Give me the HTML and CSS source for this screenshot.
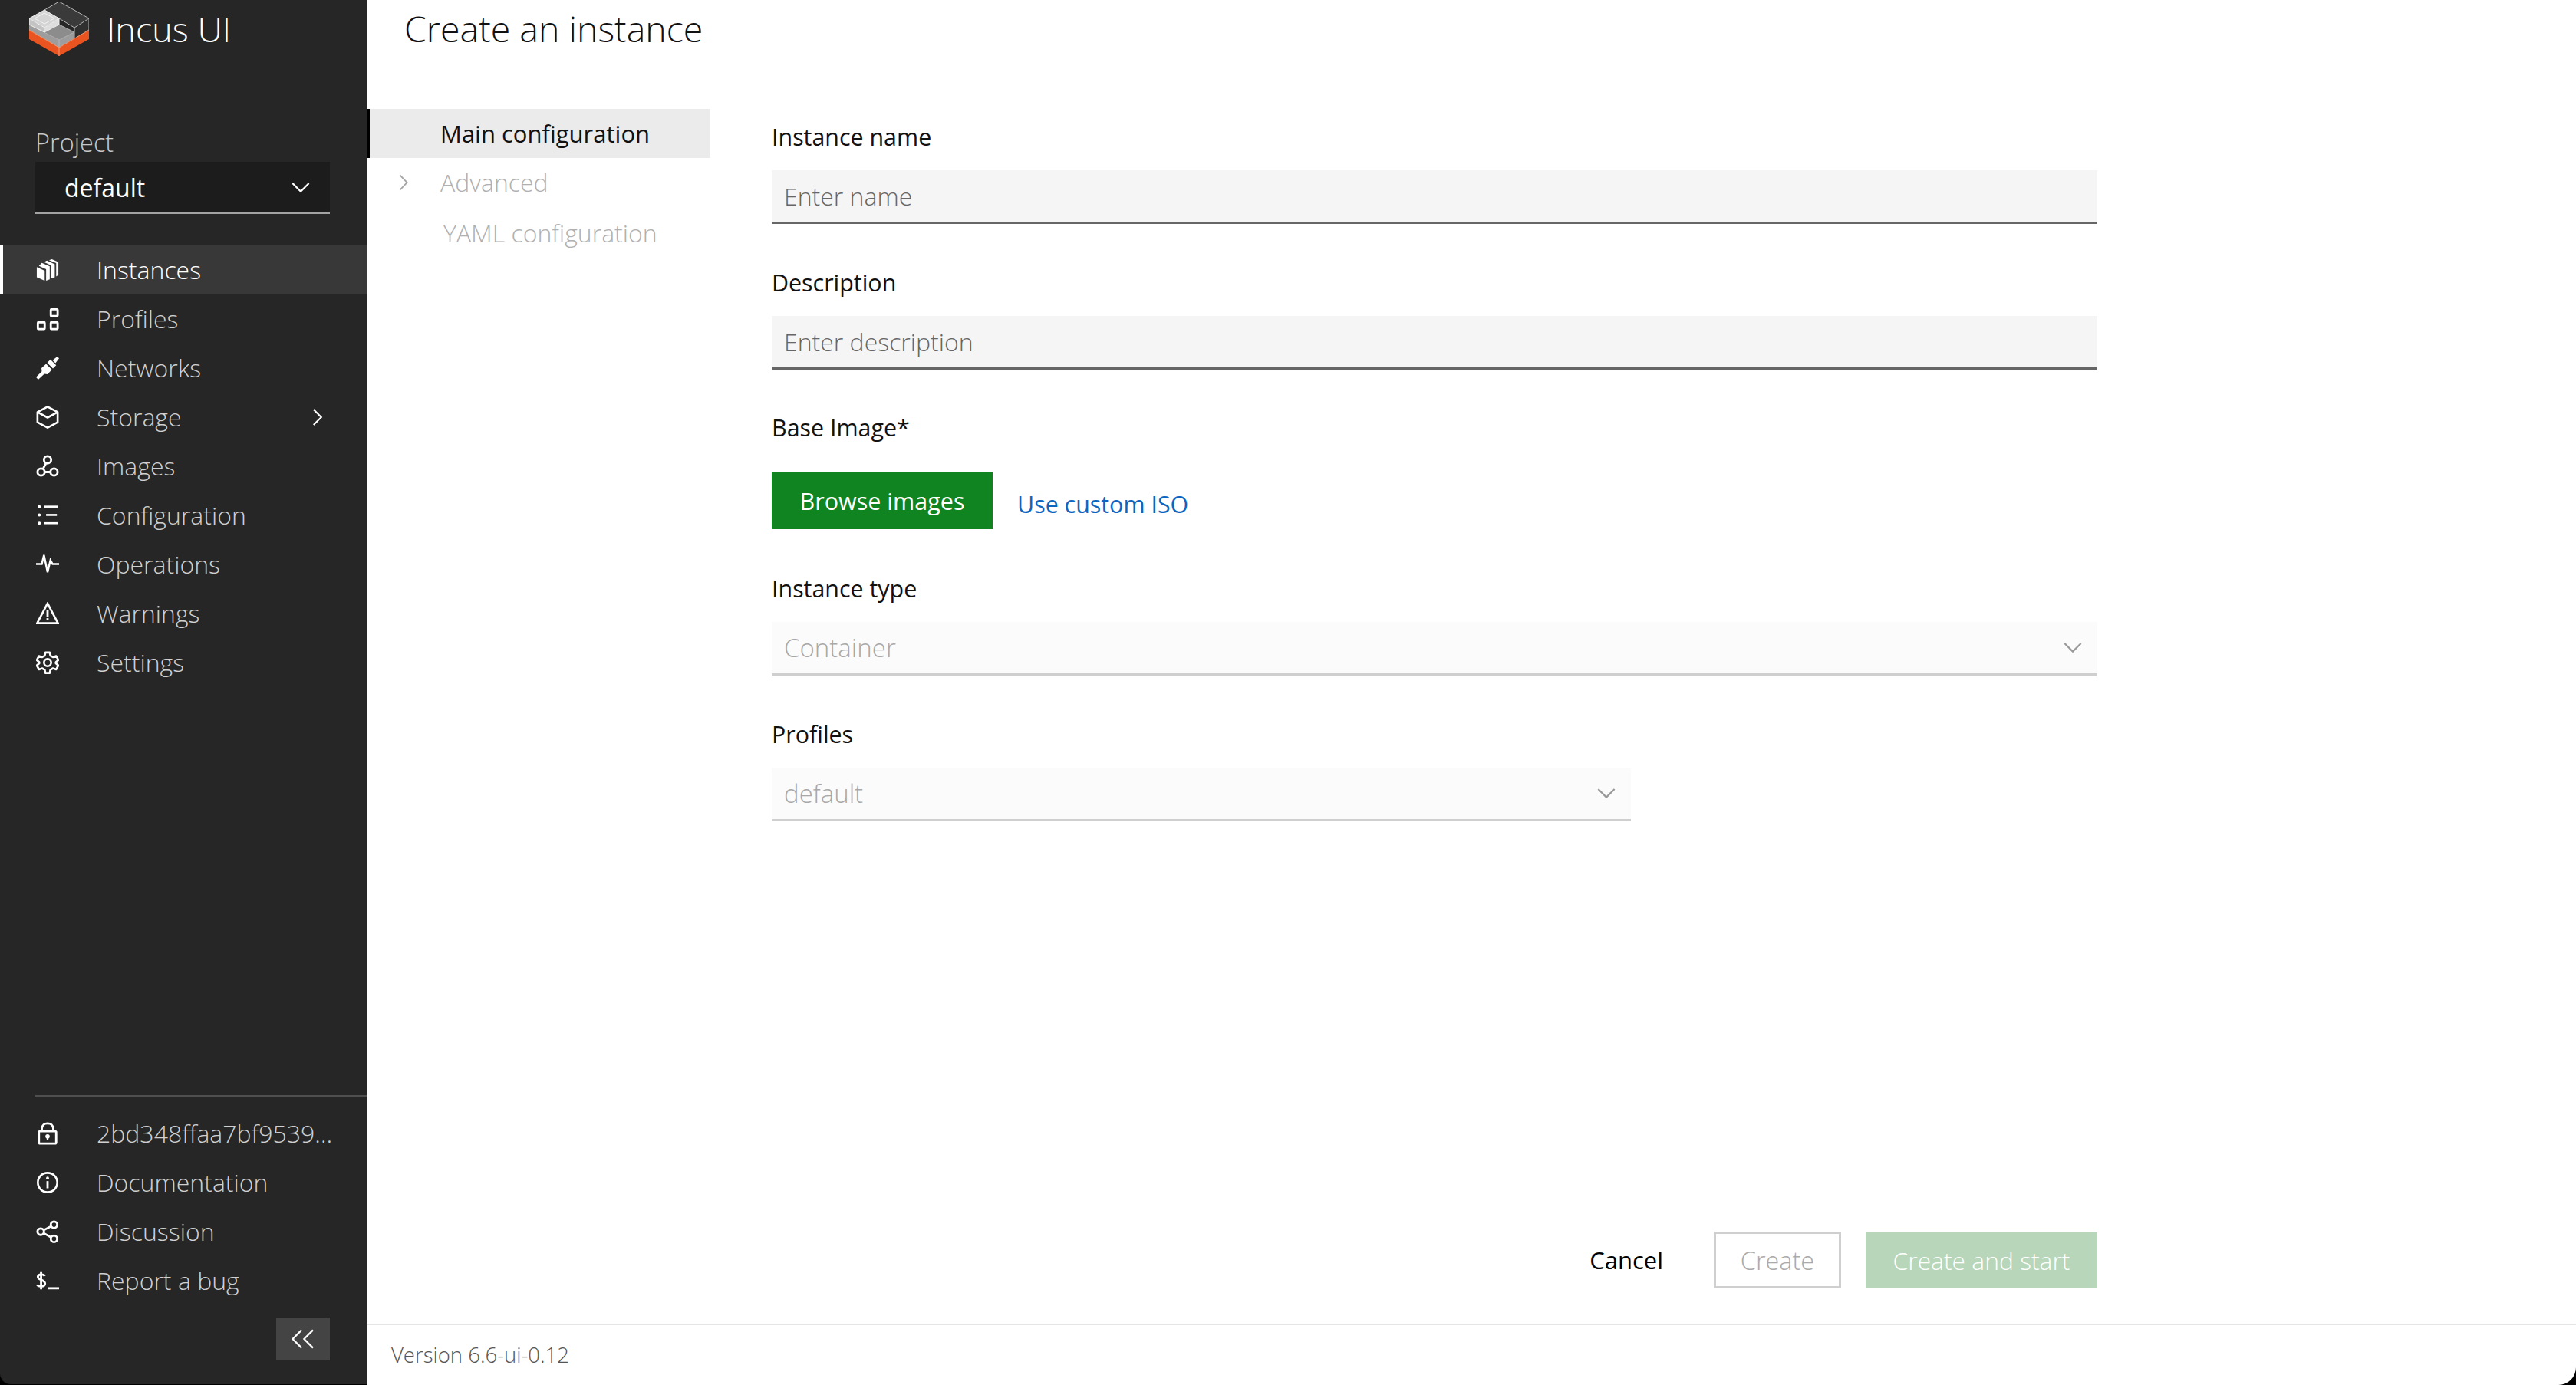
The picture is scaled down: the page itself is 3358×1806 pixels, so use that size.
FILE: index.html
```html
<!DOCTYPE html>
<html lang="en">
<head>
<meta charset="utf-8">
<title>Incus UI</title>
<link rel="stylesheet" href="styles.css">
</head>
<body>
<div class="app">
  <aside class="sidebar">
    <div class="brand">
      <svg class="logo" viewBox="38 2 78 72" width="78" height="72">
        <path d="M38 39 77 62 116 39V51L77 73 38 51Z" fill="#e95420"/>
        <path d="M38 32 77 52 97 42V50L77 62 38 39Z" fill="#9d9d9d"/>
        <path d="M58 42 77 32 97 42 77 52Z" fill="#8c8c8c"/>
        <path d="M58 13 77 2 116 24 97 36 77 24Z" fill="#3a3a3a"/>
        <path d="M97 36 116 24V39L97 50Z" fill="#303030"/>
        <path d="M38 24 58 13 77 24 58 36Z" fill="#d4d4d4"/>
        <path d="M38 24 58 36V42L38 32Z" fill="#c4c4c4"/>
        <path d="M58 36 77 24V32L58 42Z" fill="#dedede"/>
        <path d="M58 13 77 2 116 24V39M77 24 97 36 116 24M97 36V50M38 32 77 52 97 42 77 32M77 52V62M58 42 58 36" fill="none" stroke="#b5b5b5" stroke-width="1"/>
        <path d="M38 24 58 13 77 24 58 36ZM38 24V32L58 42 77 32V24M58 36V42M45 24 58 17 71 24 58 31Z" fill="none" stroke="#f2f2f2" stroke-width="1"/>
        <path d="M38 39 77 62 116 39M77 62V73" fill="none" stroke="#f49a73" stroke-width="1"/>
      </svg>
      <span class="brand-name">Incus UI</span>
    </div>
    <div class="project">
      <div class="project-label">Project</div>
      <div class="project-select">
        <span>default</span>
        <svg class="chev-down-w" viewBox="0 0 26 16" width="24" height="15"><path d="M1.500 2 13 13.500 24.500 2" fill="none" stroke="#fff" stroke-width="2.400"/></svg>
      </div>
    </div>
    <nav class="nav">
      <a class="nav-item active">
        <svg class="nav-icon" viewBox="0 0 32 32"><path d="M1 12 12 17V31L1 26Z" fill="#fff"/><path d="M8 6 19 11V29L14 31V15L4 10.500ZM15 3 26 8V26L21 28V9.500L11 5ZM22 1 31 5V23L28 25V6.500L18 2.500Z" fill="#fff"/></svg>
        <span>Instances</span>
      </a>
      <a class="nav-item">
        <svg class="nav-icon" viewBox="0 0 32 32"><g fill="none" stroke="#fff" stroke-width="3"><rect x="20.500" y="2.500" width="9.500" height="9.500" rx="1"/><rect x="2.500" y="20.500" width="9.500" height="9.500" rx="1"/><rect x="20.500" y="20.500" width="9.500" height="9.500" rx="1"/></g></svg>
        <span>Profiles</span>
      </a>
      <a class="nav-item">
        <svg class="nav-icon" viewBox="0 0 32 32"><path d="M0 28.500 8 20.500 7.500 16 14 10 22 18 16 24.500 11.500 24 3 32ZM15.500 8.500 20 4 28 12 23.500 16.500ZM23 5 29.500 0 32 2.500 27 9Z" fill="#fff"/></svg>
        <span>Networks</span>
      </a>
      <a class="nav-item has-more">
        <svg class="nav-icon" viewBox="0 0 32 32"><path d="M16 1.500 30 9V23L16 30.500 2 23V9ZM2 9 16 16.500 30 9" fill="none" stroke="#fff" stroke-width="2.800" stroke-linejoin="round"/></svg>
        <span>Storage</span>
        <svg class="chev-right" viewBox="0 0 16 26" width="14" height="24"><path d="M2 1.500 13.500 13 2 24.500" fill="none" stroke="#fff" stroke-width="2.400"/></svg>
      </a>
      <a class="nav-item">
        <svg class="nav-icon" viewBox="0 0 32 32"><g fill="none" stroke="#fff" stroke-width="3"><circle cx="16" cy="7" r="5"/><circle cx="7" cy="24" r="5"/><circle cx="25" cy="24" r="5"/><path d="M12 24H20M14 11.500 10 19"/></g></svg>
        <span>Images</span>
      </a>
      <a class="nav-item">
        <svg class="nav-icon" viewBox="0 0 32 32"><g fill="#fff"><circle cx="4.500" cy="4" r="2.200"/><circle cx="4.500" cy="15.500" r="2.200"/><circle cx="4.500" cy="27" r="2.200"/><rect x="11" y="2.500" width="19" height="2.800"/><rect x="14" y="14" width="15" height="2.800"/><rect x="11" y="25.500" width="19" height="2.800"/></g></svg>
        <span>Configuration</span>
      </a>
      <a class="nav-item">
        <svg class="nav-icon" viewBox="0 0 32 32"><path d="M0 15.500H8L11 3 16 27 20 10 23 15.500H32" fill="none" stroke="#fff" stroke-width="2.600"/></svg>
        <span>Operations</span>
      </a>
      <a class="nav-item">
        <svg class="nav-icon" viewBox="0 0 32 32"><path d="M16 2 30.500 29.500H1.500Z" fill="none" stroke="#fff" stroke-width="2.800"/><rect x="14.500" y="11.500" width="3" height="9" fill="#fff"/><rect x="14.500" y="22.500" width="3" height="3" fill="#fff"/></svg>
        <span>Warnings</span>
      </a>
      <a class="nav-item">
        <svg class="nav-icon" viewBox="0 0 32 32"><g fill="none" stroke="#fff" stroke-width="2.800" stroke-linejoin="round"><path d="M13 2H19L20 6.500 23.500 8.500 28 7 31 12.500 27.500 15.500V17L31 20 28 25.500 23.500 24 20 26 19 30.500H13L12 26 8.500 24 4 25.500 1 20 4.500 17V15.500L1 12.500 4 7 8.500 8.500 12 6.500Z"/><circle cx="16" cy="16" r="5"/></g></svg>
        <span>Settings</span>
      </a>
    </nav>
    <div class="side-bottom">
      <a class="nav-item">
        <svg class="nav-icon" viewBox="0 0 32 32"><path d="M8 13V9.500C8 -.5 24 -.5 24 9.500V13" fill="none" stroke="#fff" stroke-width="3"/><rect x="4" y="13" width="24" height="17" rx="1.500" fill="none" stroke="#fff" stroke-width="3"/><circle cx="16" cy="20" r="3" fill="#fff"/><rect x="14.800" y="20" width="2.400" height="5.500" fill="#fff"/></svg>
        <span class="truncate">2bd348ffaa7bf9539…</span>
      </a>
      <a class="nav-item">
        <svg class="nav-icon" viewBox="0 0 32 32"><circle cx="16" cy="16" r="13.500" fill="none" stroke="#fff" stroke-width="2.800"/><circle cx="16" cy="9.800" r="2" fill="#fff"/><rect x="14.500" y="14" width="3" height="10" fill="#fff"/></svg>
        <span>Documentation</span>
      </a>
      <a class="nav-item">
        <svg class="nav-icon" viewBox="0 0 32 32"><g fill="none" stroke="#fff" stroke-width="3"><circle cx="25" cy="6.500" r="4.500"/><circle cx="25" cy="26" r="4.500"/><circle cx="6.500" cy="16" r="4.500"/><path d="M10.500 14 21 8.500M10.500 18 21 24"/></g></svg>
        <span>Discussion</span>
      </a>
      <a class="nav-item">
        <svg class="nav-icon" viewBox="0 0 32 32"><path d="M12 9.500C11 7 3 6 2.500 10.500 2 15.500 12.500 14 12.500 20 12 25 3 24.500 1.500 21.500M7 3V28" fill="none" stroke="#fff" stroke-width="3"/><rect x="17" y="25" width="15" height="3" fill="#fff"/></svg>
        <span>Report a bug</span>
      </a>
      <div class="collapse-row">
        <button class="collapse-btn"><svg viewBox="0 0 34 28" width="32" height="26"><path d="M15 1.500 2.500 14 15 26.500M31 1.500 18.500 14 31 26.500" fill="none" stroke="#fff" stroke-width="2.400"/></svg></button>
      </div>
    </div>
  </aside>
  <main class="main">
    <div class="content">
      <h1 class="page-title">Create an instance</h1>
      <div class="columns">
        <nav class="form-nav">
          <a class="form-nav-item selected">Main configuration</a>
          <a class="form-nav-item muted advanced"><svg class="chev-side" viewBox="0 0 14 26" width="14" height="22"><path d="M1.500 1.500 12.500 13 1.500 24.500" fill="none" stroke="#a6a6a6" stroke-width="2.200"/></svg>Advanced</a>
          <a class="form-nav-item muted yaml">YAML configuration</a>
        </nav>
        <form class="form">
          <div class="field">
            <label class="label">Instance name</label>
            <div class="input">Enter name</div>
          </div>
          <div class="field">
            <label class="label">Description</label>
            <div class="input">Enter description</div>
          </div>
          <div class="field base">
            <label class="label">Base Image*</label>
            <div class="base-row">
              <button type="button" class="btn-browse">Browse images</button>
              <a class="link">Use custom ISO</a>
            </div>
          </div>
          <div class="field">
            <label class="label">Instance type</label>
            <div class="input disabled"><span>Container</span><svg viewBox="0 0 26 16" width="24" height="15"><path d="M1.500 2 13 13.500 24.500 2" fill="none" stroke="#999" stroke-width="2.400"/></svg></div>
          </div>
          <div class="field short">
            <label class="label">Profiles</label>
            <div class="input disabled"><span>default</span><svg viewBox="0 0 26 16" width="24" height="15"><path d="M1.500 2 13 13.500 24.500 2" fill="none" stroke="#999" stroke-width="2.400"/></svg></div>
          </div>
        </form>
      </div>
      <div class="actions">
        <a class="cancel">Cancel</a>
        <button class="btn-create">Create</button>
        <button class="btn-start">Create and start</button>
      </div>
    </div>
    <footer class="footer">Version 6.6-ui-0.12</footer>
  </main>
</div>
</body>
</html>
```
FILE: styles.css
```css
* { box-sizing: border-box; }
html, body { margin: 0; height: 100%; background: #000; }
body { font-family: "Open Sans", "Noto Sans", sans-serif; font-weight: 300; font-size: 32px; overflow: hidden; }
.app { display: flex; width: 3358px; height: 1806px; background: #000; }
.sidebar { width: 478px; height: 1805px; background: #262626; color: #d0d0d0; display: flex; flex-direction: column; border-bottom-left-radius: 14px; }
.brand { height: 76px; padding: 2px 0 0 38px; display: flex; align-items: flex-start; gap: 23px; }
.logo { display: block; }
.brand-name { font-size: 45px; color: #fff; line-height: 76px; margin-top: -2px; }
.project { padding: 87px 48px 0 46px; height: 244px; }
.project-label { height: 48px; line-height: 46px; color: #c8c8c8; font-size: 32.500px; }
.project-select { height: 68px; background: #1c1c1c; border-bottom: 2px solid #a3a3a3; padding: 0 26px 0 38px; display: flex; align-items: center; justify-content: space-between; color: #fff; font-weight: 400; font-size: 32px; }
.nav { display: flex; flex-direction: column; }
.nav-item { height: 64px; padding-left: 47px; display: flex; align-items: center; gap: 49px; position: relative; font-size: 32px; }
.nav-item span { margin-bottom: 2px; }
.nav-item.active { background: #383838; border-left: 4px solid #fff; padding-left: 43px; color: #fff; }
.nav-icon { width: 30px; height: 30px; flex: none; }
.chev-right { position: absolute; right: 57px; top: 20px; }
.side-bottom { margin-top: auto; margin-left: 46px; border-top: 2px solid #4f4f4f; padding-top: 16px; }
.side-bottom .nav-item { padding-left: 1px; }
.truncate { white-space: nowrap; }
.collapse-row { display: flex; justify-content: flex-end; padding: 16px 48px 31px 0; }
.collapse-btn { width: 70px; height: 56px; background: #444; border: 0; padding: 0; display: flex; align-items: center; justify-content: center; }
.main { width: 2880px; height: 1806px; background: #fff; display: flex; flex-direction: column; border-bottom-right-radius: 23px; color: #111; }
.content { flex: 1; position: relative; display: flex; flex-direction: column; }
.page-title { font-size: 46.500px; font-weight: 300; margin: 0; padding-left: 49px; height: 142px; line-height: 75px; color: #111; }
.columns { display: flex; flex: 1; }
.form-nav { width: 448px; display: flex; flex-direction: column; }
.form-nav-item { height: 64px; line-height: 64px; padding-left: 96px; position: relative; }
.form-nav-item.selected { background: #ebebeb; border-left: 4px solid #000; padding-left: 92px; font-weight: 400; font-size: 31px; color: #111; }
.form-nav-item.muted { color: #b0b0b0; height: 65px; }
.form-nav-item.yaml { padding-left: 100px; line-height: 66px; }
.chev-side { position: absolute; left: 41px; top: 21px; }
.form { margin-left: 80px; width: 1728px; display: flex; flex-direction: column; }
.field { height: 189.500px; padding-top: 14px; }
.field.base { height: 210px; }
.field.short { width: 1120px; }
.label { display: block; height: 66px; line-height: 45px; font-weight: 400; font-size: 30.400px; color: #111; }
.input { height: 70px; background: #f5f5f5; border-bottom: 3px solid #666; padding: 0 20px 0 16px; color: #666; display: flex; align-items: center; justify-content: space-between; }
.input.disabled { background: #fbfbfb; border-bottom-color: #cfcfcf; color: #a8a8a8; font-size: 33px; }
.base-row { display: flex; align-items: center; gap: 32px; margin-top: 15px; }
.btn-browse { width: 288px; height: 74px; border: 0; background: #0f8420; color: #fff; font: inherit; font-weight: 400; font-size: 30.500px; }
.link { color: #0e65c0; font-weight: 400; font-size: 30.400px; margin-top: 9px; }
.actions { display: flex; justify-content: flex-end; align-items: center; width: 2256px; gap: 32px; height: 74px; margin-bottom: 46px; flex: none; }
.cancel { color: #000; font-weight: 400; font-size: 31px; margin-right: 34px; }
.btn-create { width: 166px; height: 74px; background: #fff; border: 3px solid #cfcfcf; color: #aaa; font: inherit; font-size: 32.400px; }
.btn-start { width: 302px; height: 74px; background: #b8d6b9; border: 0; color: #fff; font: inherit; font-size: 31.800px; }
.footer { height: 80px; border-top: 2px solid #e5e5e5; padding-left: 32px; line-height: 78px; font-size: 27.500px; color: #555; flex: none; }
```
